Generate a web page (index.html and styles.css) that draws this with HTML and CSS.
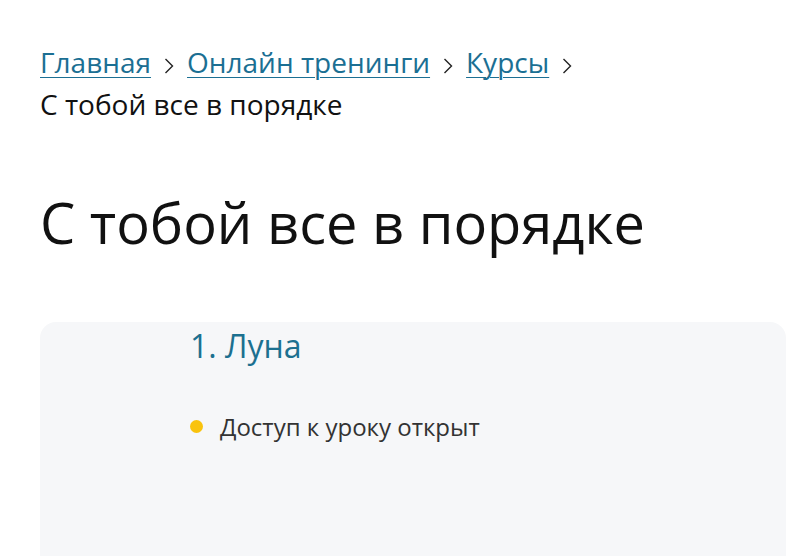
FILE: index.html
```html
<!DOCTYPE html>
<html lang="ru">
<head>
<meta charset="utf-8">
<link rel="stylesheet" href="styles.css">
</head>
<body>
<main class="page">
  <nav class="breadcrumbs">
    <a href="#" class="crumb">Главная</a><svg class="sep" viewBox="0 0 10 16" aria-hidden="true"><path d="M1.5 1L8.5 8L1.5 15"/></svg><a href="#" class="crumb">Онлайн тренинги</a><svg class="sep" viewBox="0 0 10 16" aria-hidden="true"><path d="M1.5 1L8.5 8L1.5 15"/></svg><a href="#" class="crumb">Курсы</a><svg class="sep" viewBox="0 0 10 16" aria-hidden="true"><path d="M1.5 1L8.5 8L1.5 15"/></svg>
    <span class="current">С тобой все в порядке</span>
  </nav>
  <h1 class="title">С тобой все в порядке</h1>
  <section class="lesson">
    <h2 class="lesson-title">1. Луна</h2>
    <div class="status"><span class="dot"></span><span class="status-text">Доступ к уроку открыт</span></div>
  </section>
</main>
</body>
</html>
```
FILE: styles.css
```css
html, body {
  margin: 0;
  padding: 0;
  background: #fff;
  overflow: hidden;
}
body {
  font-family: "Open Sans", "Noto Sans", sans-serif;
  color: #111;
}
.page {
  padding: 41px 0 0 40px;
}
.breadcrumbs {
  font-size: 28px;
  line-height: 42px;
  width: 640px;
}
.crumb {
  color: #1b6f93;
  text-decoration: underline;
  text-underline-offset: 4px;
  text-decoration-thickness: 1px;
}
.sep {
  display: inline-block;
  width: 10px;
  height: 16px;
  margin: 0 13px 0 13px;
  vertical-align: -1px;
  fill: none;
  stroke: #222;
  stroke-width: 1.4;
}
.current {
  display: block;
  color: #111;
}
.title {
  margin: 59px 0 0;
  font-size: 56px;
  font-weight: 400;
  line-height: 76px;
  color: #111;
}
.lesson {
  margin-top: 62px;
  background: #f6f7f9;
  border-radius: 16px 16px 0 0;
  height: 234px;
  padding: 6px 0 0 150px;
  box-sizing: border-box;
}
.lesson-title {
  margin: 0;
  font-size: 32px;
  font-weight: 400;
  line-height: 36px;
  color: #1c7090;
}
.status {
  display: flex;
  align-items: center;
  margin-top: 46px;
}
.dot {
  width: 13px;
  height: 13px;
  border-radius: 50%;
  background: #f9c30e;
  margin-right: 17px;
}
.status-text {
  font-size: 24px;
  line-height: 33px;
  color: #333;
}
```
